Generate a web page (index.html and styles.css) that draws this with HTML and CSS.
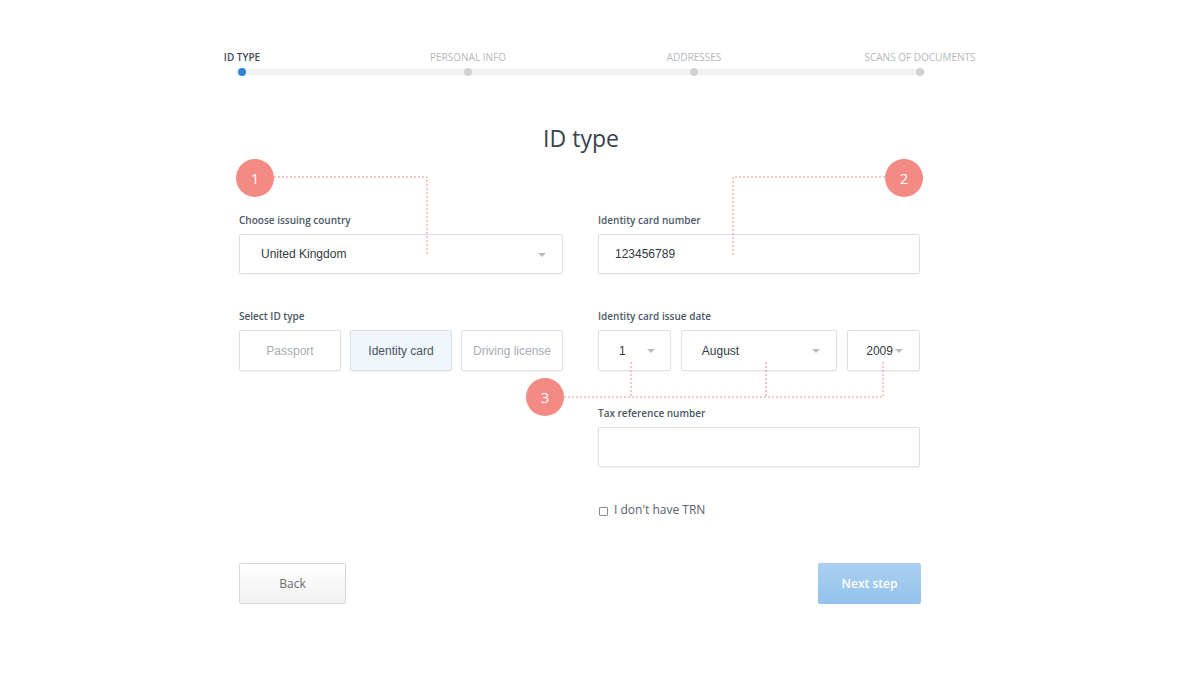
FILE: index.html
```html
<!DOCTYPE html>
<html lang="en">
<head>
  <meta charset="UTF-8">
  <meta name="viewport" content="width=device-width, initial-scale=1.0">
  <title>ID type</title>
  <link rel="stylesheet" href="styles.css">
</head>
<body>
  <div class="page">
    <div class="steps">
      <div class="step active"><span class="step-label">ID type</span><span class="dot"></span></div>
      <div class="step"><span class="step-label">Personal info</span><span class="dot"></span></div>
      <div class="step"><span class="step-label">Addresses</span><span class="dot"></span></div>
      <div class="step"><span class="step-label">Scans of documents</span><span class="dot"></span></div>
    </div>

    <h1>ID type</h1>

    <div class="form">
      <div class="col">
        <div class="form-group">
          <label>Choose issuing country</label>
          <div class="select country">United Kingdom<span class="arrow"></span></div>
        </div>
        <div class="form-group">
          <label>Select ID type</label>
          <div class="id-types">
            <div class="id-type">Passport</div>
            <div class="id-type selected">Identity card</div>
            <div class="id-type">Driving license</div>
          </div>
        </div>
      </div>

      <div class="col">
        <div class="form-group">
          <label>Identity card number</label>
          <div class="input number">123456789</div>
        </div>
        <div class="form-group">
          <label>Identity card issue date</label>
          <div class="date">
            <div class="select day">1<span class="arrow"></span></div>
            <div class="select month">August<span class="arrow"></span></div>
            <div class="select year">2009<span class="arrow"></span></div>
          </div>
        </div>
        <div class="form-group tax">
          <label>Tax reference number</label>
          <div class="input"></div>
        </div>
        <div class="check"><span class="box"></span>I don't have TRN</div>
      </div>
    </div>

    <div class="actions">
      <button class="btn back">Back</button>
      <button class="btn next">Next step</button>
    </div>

    <svg class="notes" width="1187" height="700" viewBox="0 0 1187 700">
      <g fill="none" stroke="#f08a86" stroke-width="1" stroke-dasharray="2 2">
        <polyline points="274,177 427,177 427,255"/>
        <polyline points="885,177 733,177 733,255"/>
        <polyline points="564,397 883,397"/>
        <line x1="631" y1="362" x2="631" y2="397"/>
        <line x1="766" y1="362" x2="766" y2="397"/>
        <line x1="883" y1="362" x2="883" y2="397"/>
      </g>
      <g fill="#f38a84">
        <circle cx="255" cy="178" r="19"/>
        <circle cx="904" cy="178" r="19"/>
        <circle cx="545" cy="397" r="19"/>
      </g>
      <g fill="#fff" font-family="Open Sans, sans-serif" font-size="15" text-anchor="middle">
        <text x="255" y="183.5">1</text>
        <text x="904" y="183.5">2</text>
        <text x="545" y="402.5">3</text>
      </g>
    </svg>
  </div>
</body>
</html>
```

FILE: styles.css
```css
* { box-sizing: border-box; margin: 0; padding: 0; }
body { font-family: "Open Sans", sans-serif; background: #fff; color: #333; }
.page { position: relative; width: 1187px; height: 700px; padding-top: 50px; }

.steps {
  position: relative;
  margin-left: 129px;
  width: 904px;
  display: grid;
  grid-template-columns: repeat(4, 1fr);
}
.steps::before {
  content: "";
  position: absolute;
  left: 108px;
  right: 108px;
  top: 19px;
  height: 6px;
  background: #f1f2f3;
  border-radius: 3px;
}
.step { display: flex; flex-direction: column; align-items: center; }
.step-label {
  font-size: 10px;
  line-height: 14px;
  text-transform: uppercase;
  color: #b3b8be;
}
.step.active .step-label { color: #3d4b5c; font-weight: 600; }
.dot {
  position: relative;
  margin-top: 4px;
  width: 8px;
  height: 8px;
  border-radius: 50%;
  background: #d0d2d4;
}
.step.active .dot { background: #2d83d8; }

h1 {
  margin-top: 46px;
  margin-left: 480px;
  width: 202px;
  text-align: center;
  font-size: 23px;
  font-weight: 400;
  line-height: 32px;
  color: #38424e;
}

.form {
  margin-top: 59px;
  margin-left: 239px;
  display: grid;
  grid-template-columns: 324px 322px;
  column-gap: 35px;
}
.form-group { margin-bottom: 35px; }
label {
  display: block;
  font-size: 10px;
  line-height: 14px;
  font-weight: 600;
  color: #4b5767;
  margin-bottom: 7px;
}
.input, .select, .id-type {
  position: relative;
  height: 41px;
  border: 1px solid #dde1e5;
  border-radius: 2px;
  box-shadow: 0 1px 1px rgba(0,0,0,0.04);
  font-family: "Liberation Sans", Arial, sans-serif;
  font-size: 12px;
  color: #333a42;
  display: flex;
  align-items: center;
}
.country, .number, .tax .input { height: 40px; }
.country { padding-left: 21px; }
.number { padding-left: 16px; }
.arrow {
  position: absolute;
  top: 18px;
  width: 0;
  height: 0;
  border-left: 4px solid transparent;
  border-right: 4px solid transparent;
  border-top: 4px solid #b9bdc2;
}
.country .arrow { right: 16px; }

.id-types { display: flex; gap: 9px; }
.id-type {
  width: 102px;
  justify-content: center;
  color: #a7adb4;
}
.id-type.selected {
  background: #f1f6fd;
  border-color: #d7e0ea;
  color: #48535f;
}

.date { display: flex; gap: 10px; }
.day { width: 73px; padding-left: 20px; }
.day .arrow { right: 15px; }
.month { width: 157px; padding-left: 20px; }
.month .arrow { right: 16px; }
.year { width: 73px; padding-left: 18px; }
.year .arrow { right: 16px; }

.check {
  display: flex;
  align-items: center;
  margin-left: 1px;
  font-size: 12px;
  line-height: 16px;
  color: #566271;
}
.box {
  width: 9px;
  height: 9px;
  border: 1px solid #868c93;
  border-radius: 1px;
  margin-right: 6px;
  margin-top: 2px;
}

.actions {
  margin-top: 45px;
  margin-left: 239px;
  width: 682px;
  display: flex;
  justify-content: space-between;
}
.btn {
  height: 41px;
  border-radius: 2px;
  font-family: "Open Sans", sans-serif;
  font-size: 12px;
  cursor: pointer;
}
.back {
  width: 107px;
  background: linear-gradient(#ffffff, #f1f1f1);
  border: 1px solid #d8d8d8;
  color: #6a6d70;
}
.next {
  width: 103px;
  background: linear-gradient(#abcff0, #93c3ec);
  border: none;
  color: #fff;
  font-weight: 600;
}

.notes { position: absolute; top: 0; left: 0; pointer-events: none; }
```
